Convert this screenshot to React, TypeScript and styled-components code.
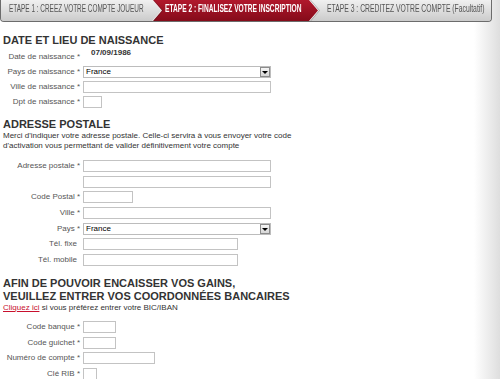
import React from "react";
import styled, { createGlobalStyle } from "styled-components";

const GlobalStyle = createGlobalStyle`
  html, body {
    margin: 0;
    padding: 0;
    height: 379px;
    overflow: hidden;
  }
  body {
    font-family: "Liberation Sans", Arial, sans-serif;
    color: #333;
    background: linear-gradient(to right, #ffffff 0, #ffffff 474px, #dedede 500px);
  }
`;

const Page = styled.div`
  width: 500px;
`;

const TabBar = styled.div`
  display: flex;
  width: 492px;
  height: 22px;
  box-sizing: border-box;
  border: 1px solid #6c6c6c;
  border-top: none;
  border-radius: 0 0 4px 4px;
  overflow: hidden;
  background: linear-gradient(#f0f0f0, #cdcdcd);
`;

const TabOuter = styled.div<{ $w?: number; $z: number; $last?: boolean }>`
  position: relative;
  z-index: ${(p) => p.$z};
  min-width: 0;
  flex: ${(p) => (p.$last ? "1 1 0" : `0 0 ${p.$w}px`)};
  margin-right: ${(p) => (p.$last ? 0 : -9)}px;
  filter: ${(p) =>
    p.$last ? "none" : "drop-shadow(1px 0 0 rgba(255,255,255,0.9)) drop-shadow(1px 0 0 rgba(0,0,0,0.25))"};
`;

const TabShape = styled.div<{ $active?: boolean; $last?: boolean; $pad: number }>`
  display: flex;
  align-items: flex-start;
  height: 100%;
  box-sizing: border-box;
  overflow: hidden;
  padding: 3px 0 0 ${(p) => p.$pad}px;
  white-space: nowrap;
  font-size: 10px;
  line-height: 12px;
  background: ${(p) =>
    p.$active ? "linear-gradient(#b1182c, #850b1a)" : "linear-gradient(#f0f0f0, #cbcbcb)"};
  clip-path: ${(p) =>
    p.$last
      ? "none"
      : "polygon(0 0, calc(100% - 9px) 0, 100% 50%, calc(100% - 9px) 100%, 0 100%)"};
`;

const TabText = styled.span<{ $active?: boolean; $scale: number }>`
  display: block;
  flex: none;
  font-size: 10px;
  line-height: 12px;
  font-weight: ${(p) => (p.$active ? 700 : 400)};
  color: ${(p) => (p.$active ? "#ffffff" : "#555555")};
  transform: scaleX(${(p) => p.$scale});
  transform-origin: 0 50%;
`;

const Content = styled.div`
  padding-left: 3px;
`;

const Heading = styled.h2<{ $mt: number }>`
  margin: ${(p) => p.$mt}px 0 0;
  font-size: 11px;
  line-height: 13px;
  font-weight: 700;
  color: #333;
`;

const Intro = styled.p`
  margin: 0;
  font-size: 8px;
  line-height: 10px;
  color: #333;
`;

const Note = styled.p`
  margin: 0;
  font-size: 8px;
  line-height: 10px;
  color: #333;
`;

const NoteLink = styled.a`
  color: #c8102e;
  text-decoration: underline;
`;

const FormGrid = styled.div<{ $mt: number; $gap: number }>`
  display: grid;
  grid-template-columns: 77px auto;
  grid-auto-rows: 12px;
  column-gap: 3px;
  row-gap: ${(p) => p.$gap}px;
  margin-top: ${(p) => p.$mt}px;
  justify-items: start;
`;

const Label = styled.label<{ $optional?: boolean }>`
  justify-self: end;
  align-self: center;
  text-align: right;
  white-space: nowrap;
  font-size: 8px;
  line-height: 10px;
  color: #555;
  padding-right: ${(p) => (p.$optional ? 3 : 0)}px;
`;

const Value = styled.span`
  align-self: start;
  margin: -3px 0 0 8px;
  font-size: 8px;
  line-height: 10px;
  font-weight: 700;
  color: #333;
`;

const TextInput = styled.input<{ $w: number }>`
  display: block;
  width: ${(p) => p.$w}px;
  height: 12px;
  box-sizing: border-box;
  margin: 0;
  padding: 0 2px;
  border: 1px solid #c3c3c3;
  background: #fff;
  font-size: 8px;
  outline: none;
`;

const SelectBox = styled.div`
  width: 188px;
  height: 12px;
  box-sizing: border-box;
  border: 1px solid #bcbcbc;
  background: #fff;
  display: flex;
  align-items: center;
  justify-content: space-between;
  padding-left: 2px;
  font-size: 8px;
  line-height: 10px;
  color: #000;
`;

const SelectButton = styled.span`
  width: 10px;
  height: 10px;
  box-sizing: border-box;
  border: 1px solid #8c8c8c;
  background: linear-gradient(#f6f6f6, #d6d6d6);
  display: flex;
  align-items: center;
  justify-content: center;
`;

const Caret = styled.span`
  width: 0;
  height: 0;
  margin-top: 1px;
  border-left: 3px solid transparent;
  border-right: 3px solid transparent;
  border-top: 3px solid #000;
`;

type Field =
  | { kind: "input"; label: string; width: number; optional?: boolean }
  | { kind: "select"; label: string; value: string };

const FieldRow: React.FC<{ field: Field }> = ({ field }) => (
  <>
    <Label $optional={field.kind === "input" && field.optional}>{field.label}</Label>
    {field.kind === "select" ? (
      <SelectBox>
        <span>{field.value}</span>
        <SelectButton>
          <Caret />
        </SelectButton>
      </SelectBox>
    ) : (
      <TextInput $w={field.width} type="text" />
    )}
  </>
);

const birthFields: Field[] = [
  { kind: "select", label: "Pays de naissance *", value: "France" },
  { kind: "input", label: "Ville de naissance *", width: 188 },
  { kind: "input", label: "Dpt de naissance *", width: 19 },
];

const addressFields: Field[] = [
  { kind: "input", label: "Adresse postale *", width: 188 },
  { kind: "input", label: "", width: 188 },
  { kind: "input", label: "Code Postal *", width: 50 },
  { kind: "input", label: "Ville *", width: 188 },
  { kind: "select", label: "Pays *", value: "France" },
  { kind: "input", label: "Tél. fixe", width: 155, optional: true },
  { kind: "input", label: "Tél. mobile", width: 155, optional: true },
];

const bankFields: Field[] = [
  { kind: "input", label: "Code banque *", width: 33 },
  { kind: "input", label: "Code guichet *", width: 33 },
  { kind: "input", label: "Numéro de compte *", width: 72 },
  { kind: "input", label: "Clé RIB *", width: 14 },
];

export default function App() {
  return (
    <Page>
      <GlobalStyle />
      <TabBar>
        <TabOuter $w={160} $z={3}>
          <TabShape $pad={8}>
            <TabText $scale={0.643}>ETAPE 1 : CREEZ VOTRE COMPTE JOUEUR</TabText>
          </TabShape>
        </TabOuter>
        <TabOuter $w={166} $z={2}>
          <TabShape $active $pad={13}>
            <TabText $active $scale={0.663}>
              ETAPE 2 : FINALISEZ VOTRE INSCRIPTION
            </TabText>
          </TabShape>
        </TabOuter>
        <TabOuter $z={1} $last>
          <TabShape $last $pad={18}>
            <TabText $scale={0.68}>ETAPE 3 : CREDITEZ VOTRE COMPTE (Facultatif)</TabText>
          </TabShape>
        </TabOuter>
      </TabBar>

      <Content>
        <Heading $mt={12}>DATE ET LIEU DE NAISSANCE</Heading>
        <FormGrid $mt={4} $gap={3}>
          <Label>Date de naissance *</Label>
          <Value>07/09/1986</Value>
          {birthFields.map((f, i) => (
            <FieldRow key={i} field={f} />
          ))}
        </FormGrid>

        <Heading $mt={10}>ADRESSE POSTALE</Heading>
        <Intro>
          Merci d'indiquer votre adresse postale. Celle-ci servira à vous envoyer votre code
          <br />
          d'activation vous permettant de valider définitivement votre compte
        </Intro>
        <FormGrid $mt={9} $gap={3.67}>
          {addressFields.map((f, i) => (
            <FieldRow key={i} field={f} />
          ))}
        </FormGrid>

        <Heading $mt={11}>
          AFIN DE POUVOIR ENCAISSER VOS GAINS,
          <br />
          VEUILLEZ ENTRER VOS COORDONNÉES BANCAIRES
        </Heading>
        <Note>
          <NoteLink href="#">Cliquez ici</NoteLink> si vous préférez entrer votre BIC/IBAN
        </Note>
        <FormGrid $mt={8} $gap={3.67}>
          {bankFields.map((f, i) => (
            <FieldRow key={i} field={f} />
          ))}
        </FormGrid>
      </Content>
    </Page>
  );
}
